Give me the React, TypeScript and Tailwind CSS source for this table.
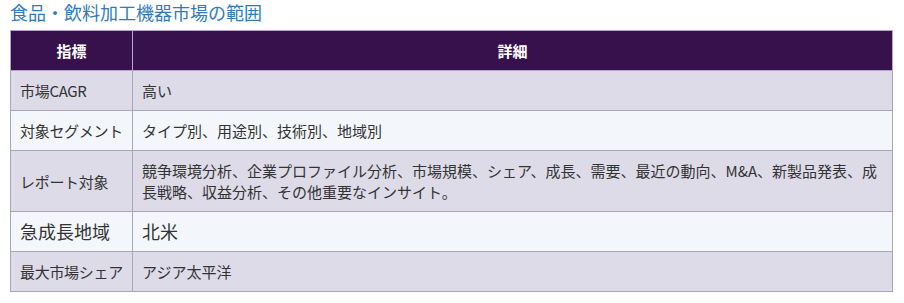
const rows = [
  { label: '市場CAGR', value: '高い', big: false },
  { label: '対象セグメント', value: 'タイプ別、用途別、技術別、地域別', big: false },
  {
    label: 'レポート対象',
    value:
      '競争環境分析、企業プロファイル分析、市場規模、シェア、成長、需要、最近の動向、M&A、新製品発表、成長戦略、収益分析、その他重要なインサイト。',
    big: false,
  },
  { label: '急成長地域', value: '北米', big: true },
  { label: '最大市場シェア', value: 'アジア太平洋', big: false },
];

export default function App() {
  return (
    <div className="bg-white w-[904px] h-[303px] pl-[10px] font-['Noto_Sans_CJK_JP','Noto_Sans',sans-serif] text-[#333]">
      <h2 className="text-[18px] leading-[24px] text-[#2d7bbd] mb-[6px] font-normal">
        食品・飲料加工機器市場の範囲
      </h2>
      <table className="w-[883px] border-collapse table-fixed">
        <colgroup>
          <col className="w-[122px]" />
          <col />
        </colgroup>
        <thead>
          <tr className="bg-[#36114b] text-white h-[40px]">
            <th className="border border-[#b7a3d0] text-[15px] font-bold text-center leading-[21px]">指標</th>
            <th className="border border-[#b7a3d0] text-[15px] font-bold text-center leading-[21px]">詳細</th>
          </tr>
        </thead>
        <tbody>
          {rows.map((r, i) => (
            <tr key={r.label} className={i % 2 === 0 ? 'bg-[#dedbe9]' : 'bg-[#f3f7fb]'}>
              <td
                className={`border border-[#aaa6ba] pl-[9px] pr-0 py-[9px] align-middle whitespace-nowrap overflow-hidden ${
                  r.big ? 'text-[18px] leading-[21px]' : 'text-[15px] leading-[21px] tracking-[-0.3px]'
                }`}
              >
                {r.label}
              </td>
              <td
                className={`border border-[#aaa6ba] px-[9px] py-[9px] align-middle ${
                  r.big ? 'text-[18px] leading-[21px]' : 'text-[15px] leading-[21px]'
                }`}
              >
                {r.value}
              </td>
            </tr>
          ))}
        </tbody>
      </table>
    </div>
  );
}
